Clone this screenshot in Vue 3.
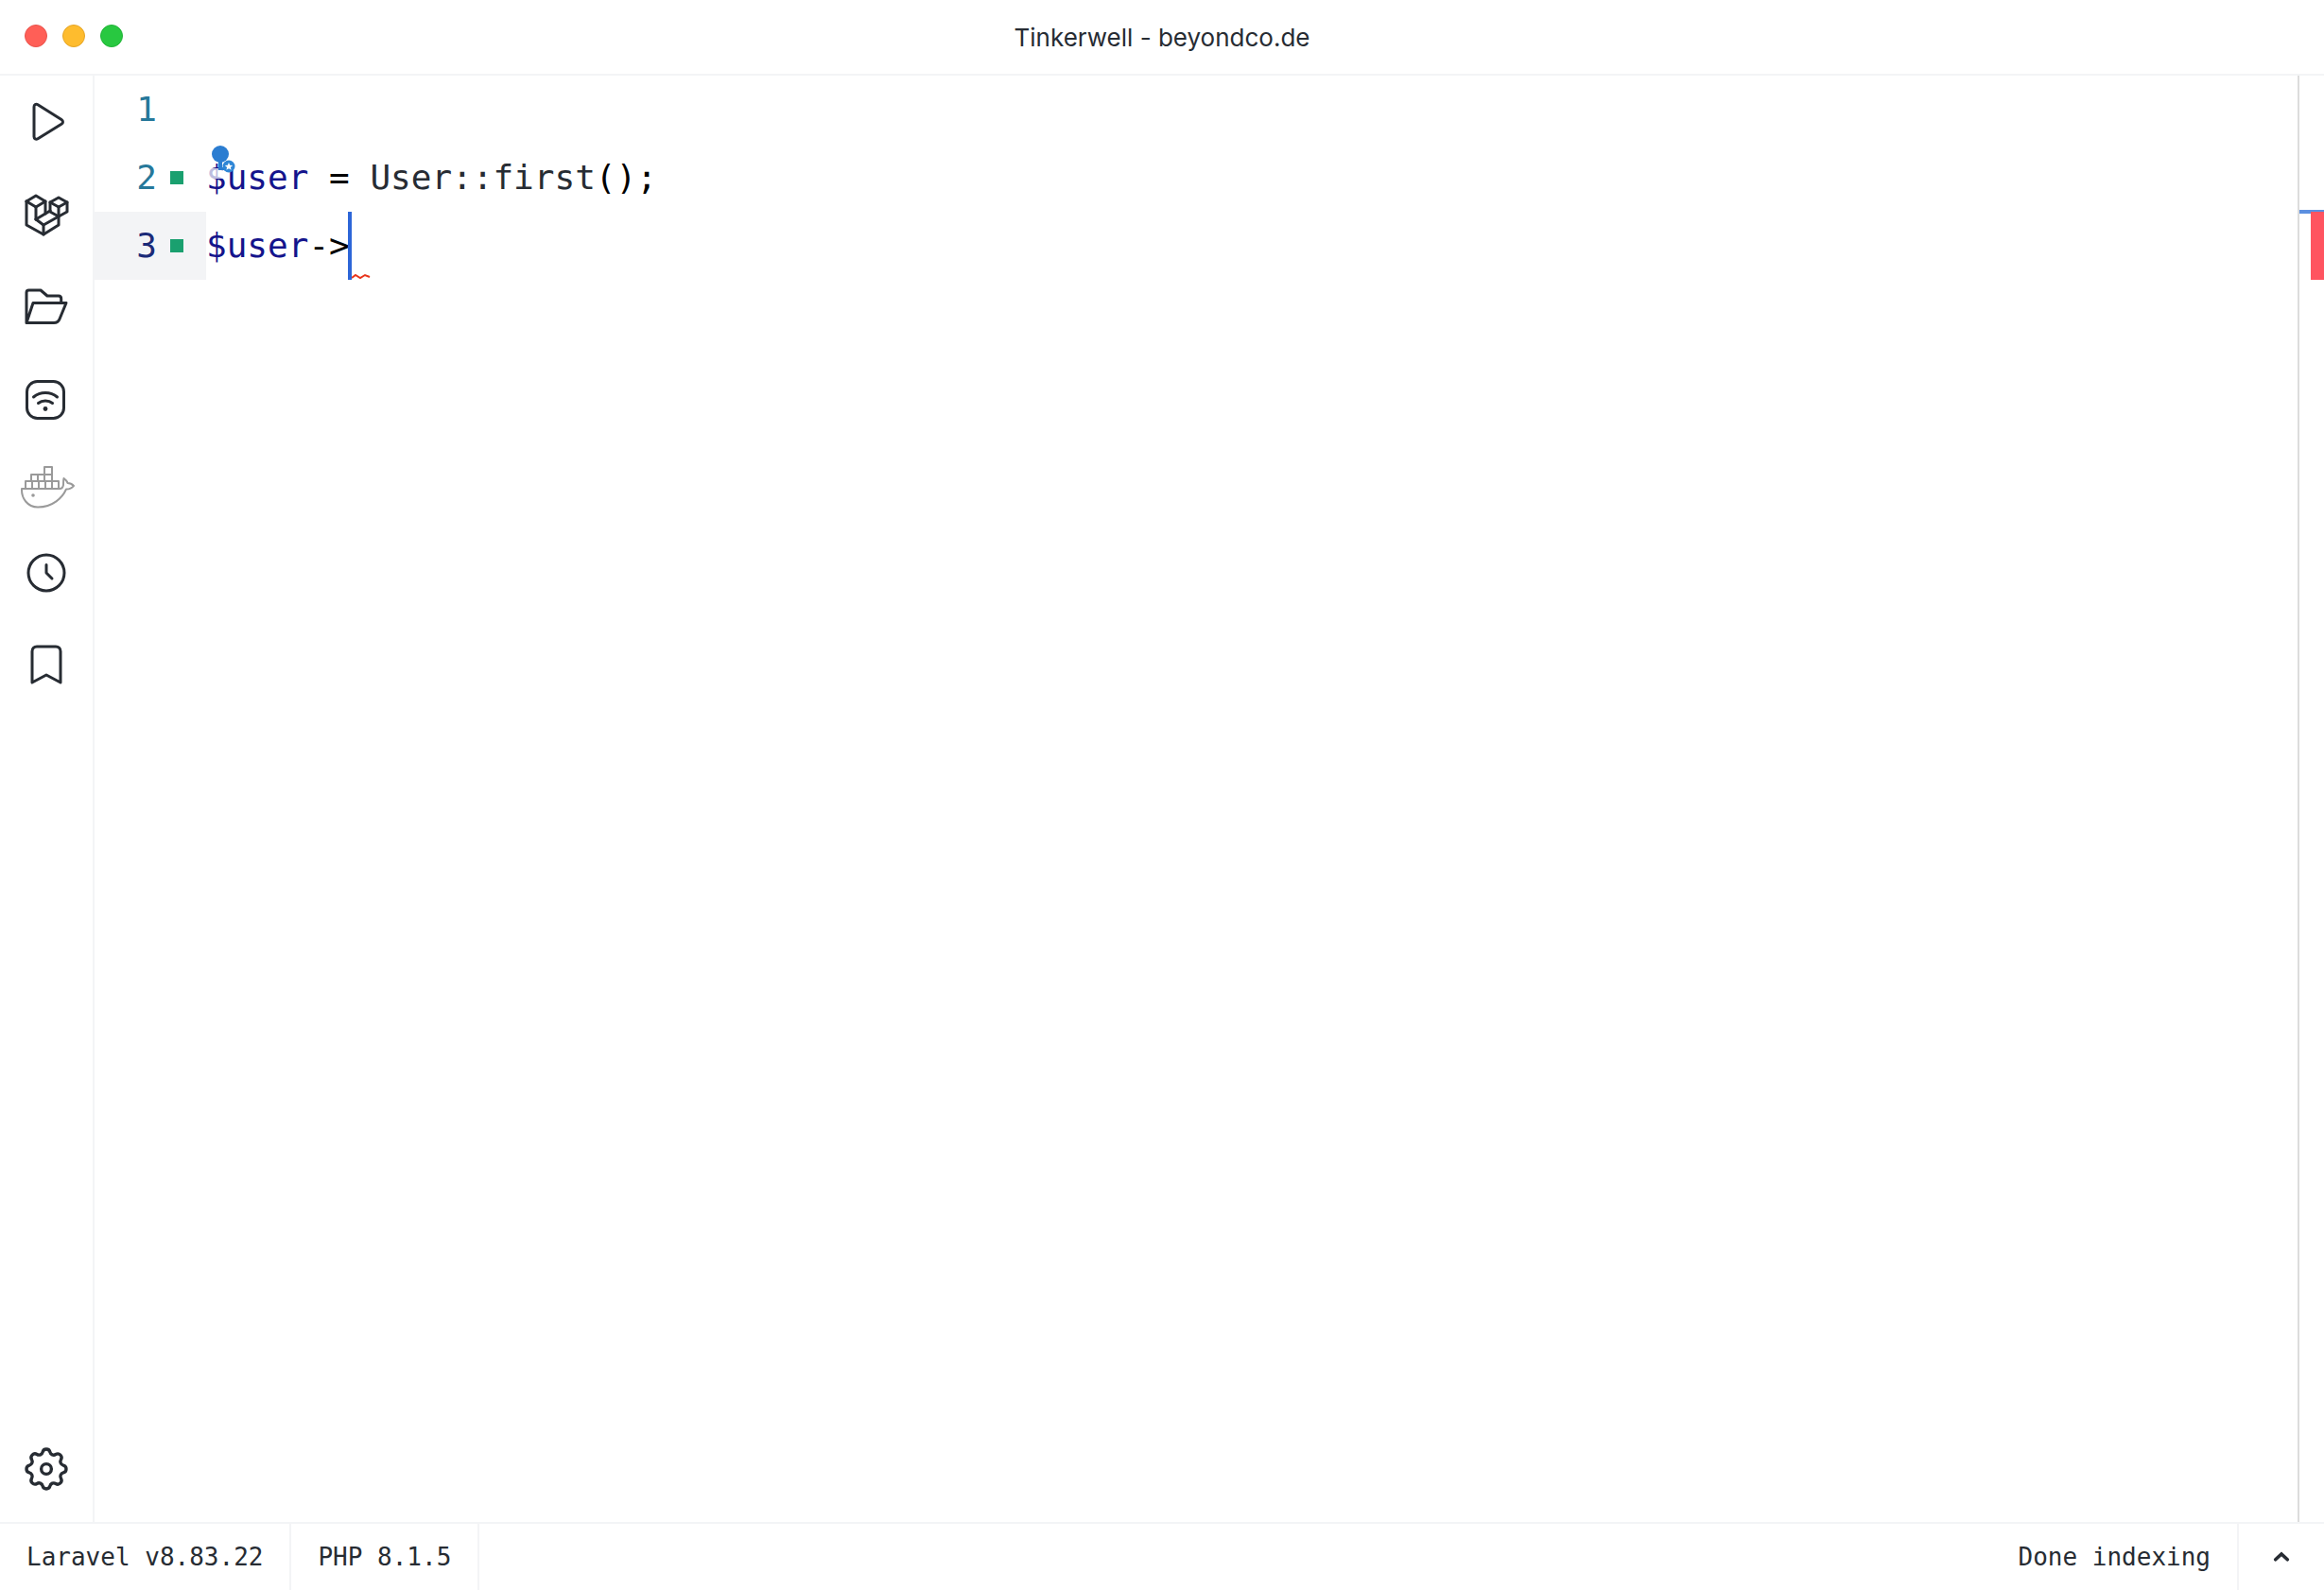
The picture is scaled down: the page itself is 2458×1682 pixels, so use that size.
<script setup>
const tools = [
  { key: 'play' }, { key: 'laravel' }, { key: 'folder' }, { key: 'wifi' },
  { key: 'docker' }, { key: 'clock' }, { key: 'bookmark' }
]
</script>

<template>
  <div class="window">
    <header class="titlebar">
      <div class="lights">
        <span class="light red"></span>
        <span class="light yellow"></span>
        <span class="light green"></span>
      </div>
      <div class="title">Tinkerwell - beyondco.de</div>
    </header>

    <div class="main">
      <aside class="sidebar">
        <div v-for="t in tools" :key="t.key" class="tool" :class="'tool-' + t.key">
          <svg v-if="t.key === 'play'" width="60" height="60" viewBox="0 0 60 60" class="ico">
            <path d="M17 14c0-2.500 2-3.500 4-2.300L46 27.500c2 1.300 2 3.500 0 4.800L21 47.700c-2 1.200-4 .2-4-2.300z"/>
          </svg>
          <svg v-else-if="t.key === 'laravel'" width="60" height="60" viewBox="0 0 60 60" class="ico">
            <path d="M9 16L19 10L29 16V29"/>
            <path d="M9 16L19 22L29 16"/>
            <path d="M19 22V35"/>
            <path d="M9 16V41L27 51L43 41V32"/>
            <path d="M19 35L27 41L43 32L52 27V17L43 12L34 17V27L43 32"/>
            <path d="M34 17L43 22L52 17"/>
            <path d="M43 22V32"/>
            <path d="M27 41V51"/>
            <path d="M19 35L34 26"/>
          </svg>
          <svg v-else-if="t.key === 'folder'" width="60" height="60" viewBox="0 0 60 60" class="ico">
            <path d="M7 45V13c0-1.400 1-2.500 2.500-2.500H22l7 6h12c1.700 0 2.700 1.200 2.700 3v4M7 45h29c3 0 5-1.400 6-4l7-17H14z" transform="translate(2 1.500)"/>
          </svg>
          <svg v-else-if="t.key === 'wifi'" width="60" height="60" viewBox="1 0 60 60" class="ico">
            <rect x="10.500" y="10.500" width="39" height="39" rx="11"/>
            <path d="M17.500 27c7-6 18-6 25 0"/>
            <path d="M22.500 33.500c4.200-3.400 10.800-3.400 15 0"/>
            <circle cx="30" cy="39.500" r="2.400" class="fill"/>
          </svg>
          <svg v-else-if="t.key === 'docker'" width="60" height="48" viewBox="0 0 60 48" class="ico docker">
            <path d="M8 25v-7h35v7M15 18v7M22 18v7M29 18v7M36 18v7M14 18v-7h22v14M21 11v7M28 3h8v8M28 11V3M28 11v7"/>
            <path d="M4 26H44c2 0 3.500-1 4-4 0-3 0-5 .5-7 2 1.500 3.500 3 4 5 2 0 4.500.8 6.500 3-2 2.500-5 3.500-8 3.500-4 9-14 19-30 19C10 45.500 3.500 36 4 26z"/>
            <circle cx="16" cy="33" r="1.800" class="dockerdot"/>
          </svg>
          <svg v-else-if="t.key === 'clock'" width="60" height="60" viewBox="0 0 60 60" class="ico">
            <circle cx="30" cy="30" r="19"/>
            <path d="M30 21.500V30l6 6"/>
          </svg>
          <svg v-else width="60" height="60" viewBox="0 0 60 60" class="ico">
            <path d="M15 17c0-3 2-5 5-5h20c3 0 5 2 5 5v33l-15-8-15 8z" transform="translate(0 -1)"/>
          </svg>
        </div>
        <div class="tool tool-gear">
          <svg width="56" height="56" viewBox="0 0 24 24" class="ico tabler gear">
            <path d="M10.325 4.317c.426 -1.756 2.924 -1.756 3.350 0a1.724 1.724 0 0 0 2.573 1.066c1.543 -.94 3.310 .826 2.370 2.370a1.724 1.724 0 0 0 1.065 2.572c1.756 .426 1.756 2.924 0 3.350a1.724 1.724 0 0 0 -1.066 2.573c.94 1.543 -.826 3.310 -2.370 2.370a1.724 1.724 0 0 0 -2.572 1.065c-.426 1.756 -2.924 1.756 -3.350 0a1.724 1.724 0 0 0 -2.573 -1.066c-1.543 .94 -3.310 -.826 -2.370 -2.370a1.724 1.724 0 0 0 -1.065 -2.572c-1.756 -.426 -1.756 -2.924 0 -3.350a1.724 1.724 0 0 0 1.066 -2.573c-.94 -1.543 .826 -3.310 2.370 -2.370c1 .608 2.296 .07 2.572 -1.065z"/>
            <circle cx="12" cy="12" r="2.300"/>
          </svg>
        </div>
      </aside>

      <section class="editor">
        <div class="line">
          <div class="gutter"><span class="num">1</span><span class="mark none"></span></div>
          <div class="code"></div>
        </div>
        <div class="line">
          <div class="gutter"><span class="num">2</span><span class="mark"></span></div>
          <div class="code"><span class="var">$user</span><span class="op"> = </span><span class="cls">User::first</span><span class="op">();</span></div>
        </div>
        <div class="line current">
          <div class="gutter"><span class="num">3</span><span class="mark"></span></div>
          <div class="code"><span class="var">$user</span><span class="op">-&gt;</span></div>
        </div>

        <svg class="bulb" width="40" height="44" viewBox="0 0 40 44">
          <rect x="0" y="27" width="18" height="11" fill="#fff" opacity=".72"/>
          <circle cx="13" cy="12" r="9" fill="#2b7dd1"/>
          <path d="M11 18h4v8h6v3H11z" fill="#2b7dd1"/>
          <circle cx="22" cy="25" r="6.500" fill="#2f86d6"/>
          <path d="M22 21l1.200 2.700 2.900.3-2.200 1.900.7 2.900-2.600-1.500-2.600 1.500.7-2.900-2.200-1.900 2.900-.3z" fill="#fff"/>
        </svg>
        <span class="cursor"></span>
        <svg class="squiggle" width="22" height="8" viewBox="0 0 22 8">
          <path d="M0 5l4-3 5 3 5-3 5 2" fill="none" stroke="#e8341c" stroke-width="2"/>
        </svg>
      </section>

      <aside class="scrollbar">
        <span class="scroll-blue"></span>
        <span class="scroll-red"></span>
      </aside>
    </div>

    <footer class="statusbar">
      <div class="cell">Laravel v8.83.22</div>
      <div class="cell">PHP 8.1.5</div>
      <div class="spacer"></div>
      <div class="cell">Done indexing</div>
      <div class="cell chev">
        <svg width="20" height="14" viewBox="0 0 20 14">
          <path d="M3.700 9.800L10 4l6.300 5.800" fill="none" stroke="#272c33" stroke-width="3.600" stroke-linecap="round"/>
        </svg>
      </div>
    </footer>
  </div>
</template>

<style>
html, body { margin: 0; background: #fff; }
</style>

<style scoped>
.window {
  width: 2458px;
  height: 1682px;
  display: flex;
  flex-direction: column;
  background: #fff;
  color: #272c33;
  overflow: hidden;
}
.titlebar {
  height: 78px;
  flex: none;
  display: grid;
  grid-template-columns: 1fr auto 1fr;
  align-items: center;
  border-bottom: 2px solid #f3f4f6;
}
.lights {
  display: flex;
  gap: 16px;
  padding: 0 0 3px 26px;
}
.light {
  width: 24px;
  height: 24px;
  border-radius: 50%;
  box-sizing: border-box;
}
.red { background: #ff5f57; border: 1px solid #e9534c; }
.yellow { background: #febc2e; border: 1px solid #e5a526; }
.green { background: #28c840; border: 1px solid #22b438; }
.title {
  grid-column: 2;
  font-family: Inter, "Liberation Sans", sans-serif;
  font-size: 26px;
  color: #272c33;
}
.main {
  flex: 1;
  display: flex;
  min-height: 0;
}
.sidebar {
  width: 98px;
  flex: none;
  border-right: 2px solid #f3f4f6;
  display: flex;
  flex-direction: column;
  padding-bottom: 26px;
}
.tool {
  height: 98px;
  display: flex;
  align-items: center;
  justify-content: center;
  flex: none;
}
.tool-docker { height: 86px; }
.tool-clock { height: 96px; }
.tool-gear { margin-top: auto; height: 60px; }
.ico {
  fill: none;
  stroke: #272c33;
  stroke-width: 3;
  stroke-linecap: round;
  stroke-linejoin: round;
  display: block;
}
.ico.tabler { stroke-width: 1.300; }
.ico.gear { stroke-width: 1.450; }
.ico.docker { stroke: #9a9a9a; stroke-width: 2; }
.ico .fill { fill: #272c33; stroke: none; }
.ico .dockerdot { fill: #9a9a9a; stroke: none; }

.editor {
  flex: 1;
  min-width: 0;
  position: relative;
  font-family: "DejaVu Sans Mono", monospace;
  font-size: 36px;
}
.line {
  height: 72px;
  display: flex;
  line-height: 72px;
}
.gutter {
  width: 118px;
  flex: none;
  display: flex;
  align-items: center;
}
.current .gutter { background: #f3f4f6; }
.num {
  width: 66px;
  text-align: right;
  color: #26789a;
}
.current .num { color: #1a2a78; }
.mark {
  width: 14px;
  height: 14px;
  margin-left: 14px;
  background: #1aa06f;
}
.mark.none { background: transparent; }
.code {
  white-space: pre;
}
.var { color: #14148c; }
.op { color: #000; }
.cls { color: #272c33; }
.bulb {
  position: absolute;
  left: 120px;
  top: 71px;
}
.cursor {
  position: absolute;
  left: 268px;
  top: 144px;
  width: 4px;
  height: 72px;
  background: #2d66d8;
}
.squiggle {
  position: absolute;
  left: 272px;
  top: 209px;
}
.scrollbar {
  width: 26px;
  flex: none;
  border-left: 2px solid #dcdcdc;
  position: relative;
}
.scroll-blue {
  position: absolute;
  left: 0;
  right: 0;
  top: 142px;
  height: 4px;
  background: #5b8fe0;
}
.scroll-red {
  position: absolute;
  right: 0;
  top: 144px;
  width: 14px;
  height: 72px;
  background: #ff5460;
}
.statusbar {
  height: 70px;
  flex: none;
  border-top: 2px solid #f3f4f6;
  display: flex;
  align-items: stretch;
  font-family: "DejaVu Sans Mono", monospace;
  font-size: 26px;
  color: #272c33;
}
.cell {
  display: flex;
  align-items: center;
  padding: 0 28px;
  border-right: 2px solid #f3f4f6;
}
.spacer { flex: 1; }
.cell.chev {
  border-right: none;
  width: 90px;
  box-sizing: border-box;
  padding: 0;
  justify-content: center;
}
</style>
